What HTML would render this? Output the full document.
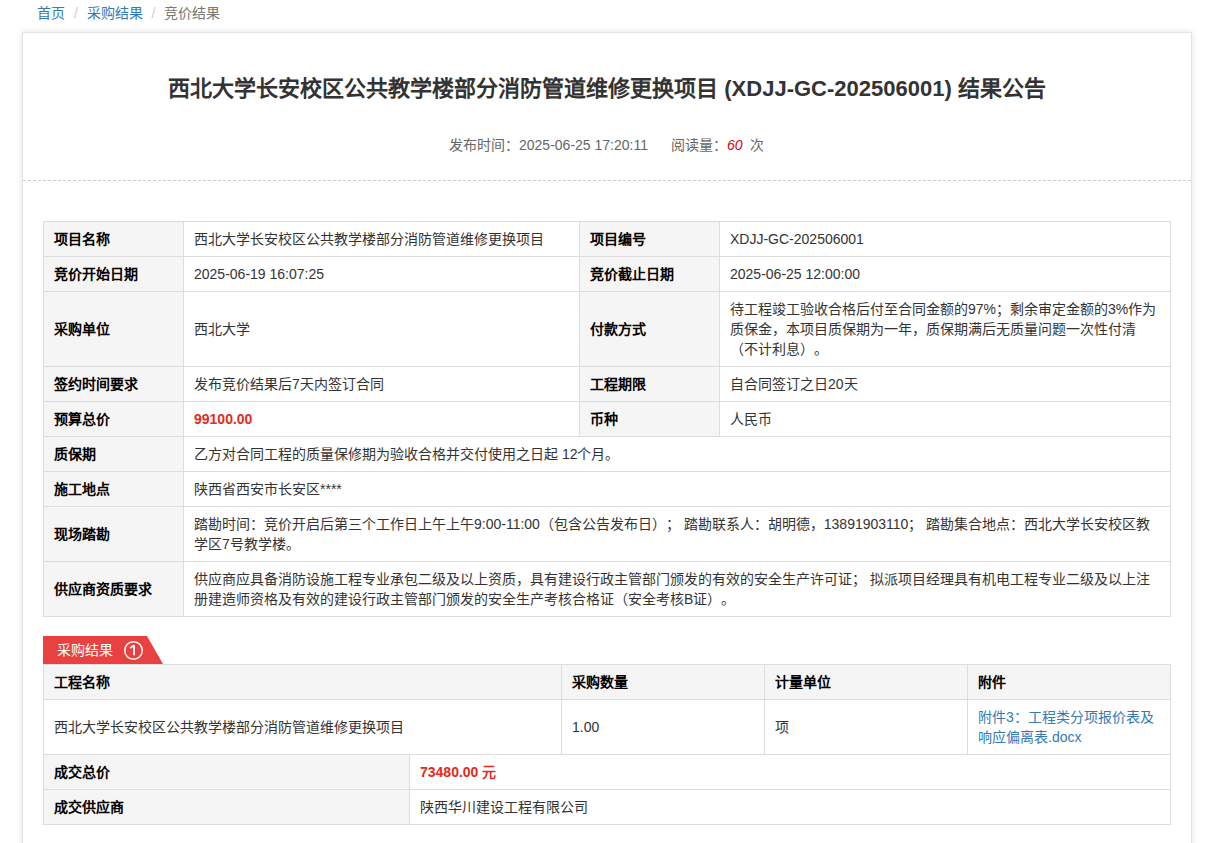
<!DOCTYPE html>
<html lang="zh-CN"><head><meta charset="utf-8">
<style>
*{box-sizing:border-box;margin:0;padding:0}
html,body{width:1211px;height:843px;overflow:hidden;background:#fff}
body{text-spacing-trim:space-all;font-family:"Liberation Sans",sans-serif;font-size:14px;color:#333;line-height:20px;position:relative}
.bc{position:absolute;left:37px;top:3px;white-space:nowrap;line-height:20px}
.bc a{color:#337ab7;text-decoration:none}
.bc .sep{color:#ccc;padding:0 5px}
.bc .act{color:#777}
.box{position:absolute;left:22px;top:32px;width:1170px;height:830px;border:1px solid #e3e3e3;box-shadow:0 0 6px rgba(0,0,0,.12);background:#fff}
.title{position:absolute;left:0;width:1168px;top:41px;text-align:center;font-size:22px;font-weight:bold;line-height:30px;color:#333}
.meta{position:absolute;left:0;width:1168px;top:102px;text-align:center;color:#666;line-height:20px}
.dash{position:absolute;left:0;top:147px;width:1168px;height:1px;background:repeating-linear-gradient(to right,#ccc 0 3px,transparent 3px 5px)}
table{border-collapse:collapse;table-layout:fixed;position:absolute}
td,th{border:1px solid #ddd;padding:7px 10px;line-height:20px;vertical-align:middle;text-align:left;word-break:break-all}
.k{background:#f5f5f5;font-weight:bold;color:#000}
.red{color:#e52a20;font-weight:bold}
.t1{left:20px;top:188px;width:1128px}
.tab{position:absolute;left:20px;top:603px;height:28px}
.t2{left:20px;top:631px;width:1128px}
.t3{left:20px;top:721px;width:1128px}
.link{color:#337ab7}
</style></head><body>
<div class="bc"><a>首页</a> <span class="sep">/&nbsp;</span><a>采购结果</a> <span class="sep">/&nbsp;</span><span class="act">竞价结果</span></div>
<div class="box">
 <div class="title">西北大学长安校区公共教学楼部分消防管道维修更换项目 (XDJJ-GC-202506001) 结果公告</div>
 <div class="meta"><span style="position:absolute;left:426px;top:0">发布时间：2025-06-25 17:20:11</span><span style="position:absolute;left:648px;top:0">阅读量：<em style="color:#d7000f;margin-right:4px">60</em> 次</span></div>
 <div class="dash"></div>
 <table class="t1">
  <colgroup><col style="width:140px"><col style="width:396px"><col style="width:140px"><col></colgroup>
  <tr><td class="k">项目名称</td><td>西北大学长安校区公共教学楼部分消防管道维修更换项目</td><td class="k">项目编号</td><td>XDJJ-GC-202506001</td></tr>
  <tr><td class="k">竞价开始日期</td><td>2025-06-19 16:07:25</td><td class="k">竞价截止日期</td><td>2025-06-25 12:00:00</td></tr>
  <tr><td class="k">采购单位</td><td>西北大学</td><td class="k">付款方式</td><td>待工程竣工验收合格后付至合同金额的97%；剩余审定金额的3%作为质保金，本项目质保期为一年，质保期满后无质量问题一次性付清（不计利息）。</td></tr>
  <tr><td class="k">签约时间要求</td><td>发布竞价结果后7天内签订合同</td><td class="k">工程期限</td><td>自合同签订之日20天</td></tr>
  <tr><td class="k">预算总价</td><td class="red">99100.00</td><td class="k">币种</td><td>人民币</td></tr>
  <tr><td class="k">质保期</td><td colspan="3">乙方对合同工程的质量保修期为验收合格并交付使用之日起 12个月。</td></tr>
  <tr><td class="k">施工地点</td><td colspan="3">陕西省西安市长安区****</td></tr>
  <tr><td class="k">现场踏勘</td><td colspan="3">踏勘时间：竞价开启后第三个工作日上午上午9:00-11:00（包含公告发布日）； 踏勘联系人：胡明德，13891903110； 踏勘集合地点：西北大学长安校区教学区7号教学楼。</td></tr>
  <tr><td class="k">供应商资质要求</td><td colspan="3">供应商应具备消防设施工程专业承包二级及以上资质，具有建设行政主管部门颁发的有效的安全生产许可证； 拟派项目经理具有机电工程专业二级及以上注册建造师资格及有效的建设行政主管部门颁发的安全生产考核合格证（安全考核B证）。</td></tr>
 </table>

 <div class="tab"><svg width="121" height="28" style="position:absolute;left:0;top:0"><polygon points="0,0 104,0 120,28 0,28" fill="#e94141"/><circle cx="90.5" cy="14.5" r="8.75" fill="none" stroke="#fff" stroke-width="1.5"/><path d="M91,9V19.2" stroke="#fff" stroke-width="1.8" fill="none"/><path d="M87,12.2L91.2,9.2" stroke="#fff" stroke-width="1.5" fill="none"/></svg><span style="position:absolute;left:14px;top:4px;color:#fff;white-space:nowrap">采购结果</span></div>
 <table class="t2">
  <colgroup><col style="width:518px"><col style="width:203px"><col style="width:203px"><col></colgroup>
  <tr><td class="k">工程名称</td><td class="k">采购数量</td><td class="k">计量单位</td><td class="k">附件</td></tr>
  <tr><td>西北大学长安校区公共教学楼部分消防管道维修更换项目</td><td>1.00</td><td>项</td><td class="link">附件3：工程类分项报价表及响应偏离表.docx</td></tr>
 </table>
 <table class="t3">
  <colgroup><col style="width:366px"><col></colgroup>
  <tr><td class="k">成交总价</td><td class="red">73480.00 元</td></tr>
  <tr><td class="k">成交供应商</td><td>陕西华川建设工程有限公司</td></tr>
 </table>
</div>
</body></html>
